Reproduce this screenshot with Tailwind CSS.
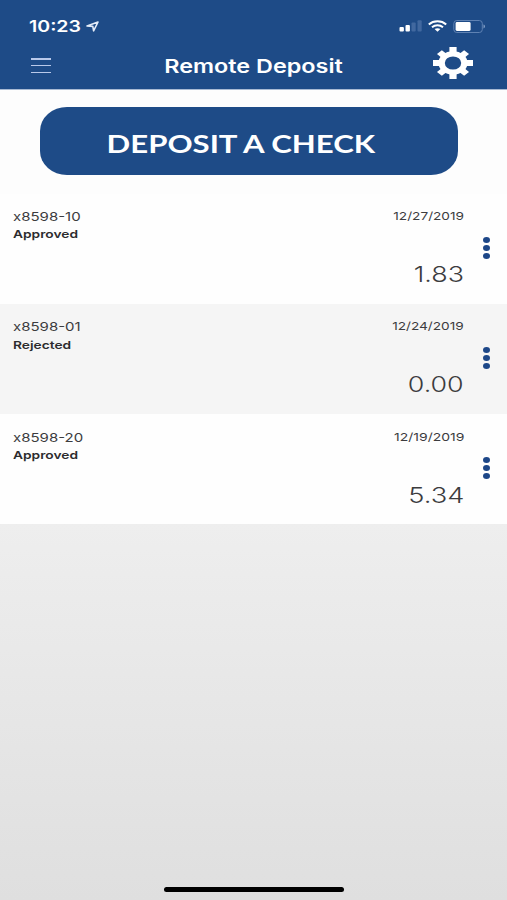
<!DOCTYPE html>
<html lang="en">
<head>
    <meta charset="UTF-8">
    <meta name="viewport" content="width=device-width, initial-scale=1.0">
    <title>Remote Deposit</title>
    <script src="https://cdn.jsdelivr.net/npm/@tailwindcss/browser@4"></script>
</head>
<body class="h-[900px] w-[507px] flex flex-col overflow-hidden font-['Inter',sans-serif] text-[#3c3c3e]">

    <!-- Header: status bar + title bar -->
    <header class="h-[89px] shrink-0 bg-[#1e4b87] text-white">
        <div class="h-[42px] pl-[29px] pr-[21px] pt-[10px] flex items-center justify-between">
            <div class="flex items-center">
                <div class="w-[57px]"><span class="inline-block origin-left scale-x-[1.22] text-[16px] leading-5 font-semibold">10:23</span></div>
                <svg class="w-[13px] h-[11px]" viewBox="0 0 13 11" preserveAspectRatio="none" fill="none" stroke="#e4ecf8" stroke-width="1.6" stroke-linejoin="round">
                    <path d="M1 5 12 1 7.6 9.8 6.8 5.4Z"/>
                </svg>
            </div>
            <div class="flex items-center">
                <svg class="w-[24px] h-[12px]" viewBox="0 0 24 12">
                    <rect x="0.5" y="7" width="4.4" height="4.5" rx="1" fill="#fff"/>
                    <rect x="6.5" y="5" width="4.4" height="6.5" rx="1" fill="#fff"/>
                    <rect x="12.5" y="2.5" width="4.2" height="9" rx="1" fill="#41689f"/>
                    <rect x="18.5" y="0.2" width="4.2" height="11.3" rx="1" fill="#41689f"/>
                </svg>
                <svg class="ml-[5px] w-[19px] h-[12px]" viewBox="0 0 19 12" fill="none" stroke="#fff" stroke-width="2">
                    <path d="M.8 4.4C5.6.1 13.4.1 18.2 4.4"/>
                    <path d="M4 7.2c3.2-2.7 7.8-2.7 11 0"/>
                    <path d="M6.6 9.1c1.8-1.3 4-1.3 5.8 0L9.5 11.8Z" fill="#fff" stroke="none"/>
                </svg>
                <svg class="ml-[6px] w-[33px] h-[13px]" viewBox="0 0 33 13">
                    <rect x="0.8" y="0.5" width="28.5" height="12" rx="3" fill="none" stroke="#5f82b3"/>
                    <rect x="2.6" y="2" width="15" height="9" rx="1.4" fill="#fff"/>
                    <path d="M30.5 4.6c2 .5 2 3.3 0 3.8Z" fill="#7f9cc5"/>
                </svg>
            </div>
        </div>
        <div class="h-[47px] pl-[31px] pr-[34px] flex items-center">
            <div class="w-[20px] h-[15px] flex flex-col justify-between">
                <div class="h-[1.5px] bg-[#b9c9ea]"></div>
                <div class="h-[1.5px] bg-[#b9c9ea]"></div>
                <div class="h-[1.5px] bg-[#b9c9ea]"></div>
            </div>
            <h1 class="flex-1 pl-[24px] pt-[2px] text-center"><span class="inline-block scale-x-[1.23] text-[19px] leading-6 font-semibold whitespace-nowrap">Remote Deposit</span></h1>
            <svg class="mb-[5px] w-[40px] h-[32px]" viewBox="-50 -50 100 100" preserveAspectRatio="none">
                <circle r="28.5" fill="none" stroke="#fff" stroke-width="16"/>
                <g id="teeth" stroke="#fff" stroke-width="18">
                    <path d="M0-50V-32M0 50V32M-50 0H-32M50 0H32"/>
                </g>
                <use href="#teeth" transform="rotate(45) scale(.96)"/>
            </svg>
        </div>
    </header>

    <!-- Deposit button -->
    <div class="h-[105px] shrink-0 border-t border-[#a9bad3] bg-[#fdfdfd] pl-[40px] pr-[49px] pt-[17px]">
        <button class="w-full h-[68px] rounded-[27px/24px] bg-[#1e4b87] pr-[16px] text-white flex items-center justify-center">
            <span class="mt-[3px] inline-block scale-x-[1.245] font-['Lato',sans-serif] text-[25px] leading-8 font-bold whitespace-nowrap">DEPOSIT A CHECK</span>
        </button>
    </div>

    <!-- Deposits list -->
    <ul class="shrink-0">
        <li class="h-[110px] flex justify-between bg-[#fefefe] pl-[13px] pr-[17px]">
            <div class="pt-[14px]">
                <div class="origin-left scale-x-[1.25] text-[12px] leading-[18px]">x8598-10</div>
                <div class="origin-left scale-x-[1.25] text-[11px] leading-[17px] font-semibold text-[#2c2c2e]">Approved</div>
            </div>
            <div class="flex">
                <div class="pt-[13px] text-right">
                    <div class="origin-right scale-x-[1.24] text-[11px] leading-[18px]">12/27/2019</div>
                    <div class="mt-[34px] origin-right scale-x-[1.22] text-[22px] leading-[30px] font-light">1.83</div>
                </div>
                <div class="ml-[19px] mt-[43px] flex flex-col gap-[2px]">
                    <i class="w-[7px] h-[6px] rounded-[50%] bg-[#1d4788]"></i>
                    <i class="w-[7px] h-[6px] rounded-[50%] bg-[#1d4788]"></i>
                    <i class="w-[7px] h-[6px] rounded-[50%] bg-[#1d4788]"></i>
                </div>
            </div>
        </li>
        <li class="h-[110px] flex justify-between bg-[#f5f5f5] pl-[13px] pr-[17px]">
            <div class="pt-[14px]">
                <div class="origin-left scale-x-[1.25] text-[12px] leading-[18px]">x8598-01</div>
                <div class="origin-left scale-x-[1.25] text-[11px] leading-[18px] font-semibold text-[#2c2c2e]">Rejected</div>
            </div>
            <div class="flex">
                <div class="pt-[13px] text-right">
                    <div class="origin-right scale-x-[1.24] text-[11px] leading-[18px]">12/24/2019</div>
                    <div class="mt-[34px] origin-right scale-x-[1.22] text-[22px] leading-[30px] font-light">0.00</div>
                </div>
                <div class="ml-[19px] mt-[43px] flex flex-col gap-[2px]">
                    <i class="w-[7px] h-[6px] rounded-[50%] bg-[#1d4788]"></i>
                    <i class="w-[7px] h-[6px] rounded-[50%] bg-[#1d4788]"></i>
                    <i class="w-[7px] h-[6px] rounded-[50%] bg-[#1d4788]"></i>
                </div>
            </div>
        </li>
        <li class="h-[110px] flex justify-between bg-[#fefefe] pl-[13px] pr-[17px]">
            <div class="pt-[15px]">
                <div class="origin-left scale-x-[1.25] text-[12px] leading-[18px]">x8598-20</div>
                <div class="origin-left scale-x-[1.25] text-[11px] leading-[17px] font-semibold text-[#2c2c2e]">Approved</div>
            </div>
            <div class="flex">
                <div class="pt-[14px] text-right">
                    <div class="origin-right scale-x-[1.27] text-[11px] leading-[18px]">12/19/2019</div>
                    <div class="mt-[34px] origin-right scale-x-[1.24] text-[22px] leading-[30px] font-light">5.34</div>
                </div>
                <div class="ml-[19px] mt-[43px] flex flex-col gap-[2px]">
                    <i class="w-[7px] h-[6px] rounded-[50%] bg-[#1d4788]"></i>
                    <i class="w-[7px] h-[6px] rounded-[50%] bg-[#1d4788]"></i>
                    <i class="w-[7px] h-[6px] rounded-[50%] bg-[#1d4788]"></i>
                </div>
            </div>
        </li>
    </ul>

    <!-- Empty area with home indicator -->
    <div class="flex-1 flex items-end pl-[164px] pb-[8px] bg-linear-to-b from-[#eeeeee] to-[#dfdfdf]">
        <div class="w-[180px] h-[5px] rounded-full bg-black"></div>
    </div>
</body>
</html>
